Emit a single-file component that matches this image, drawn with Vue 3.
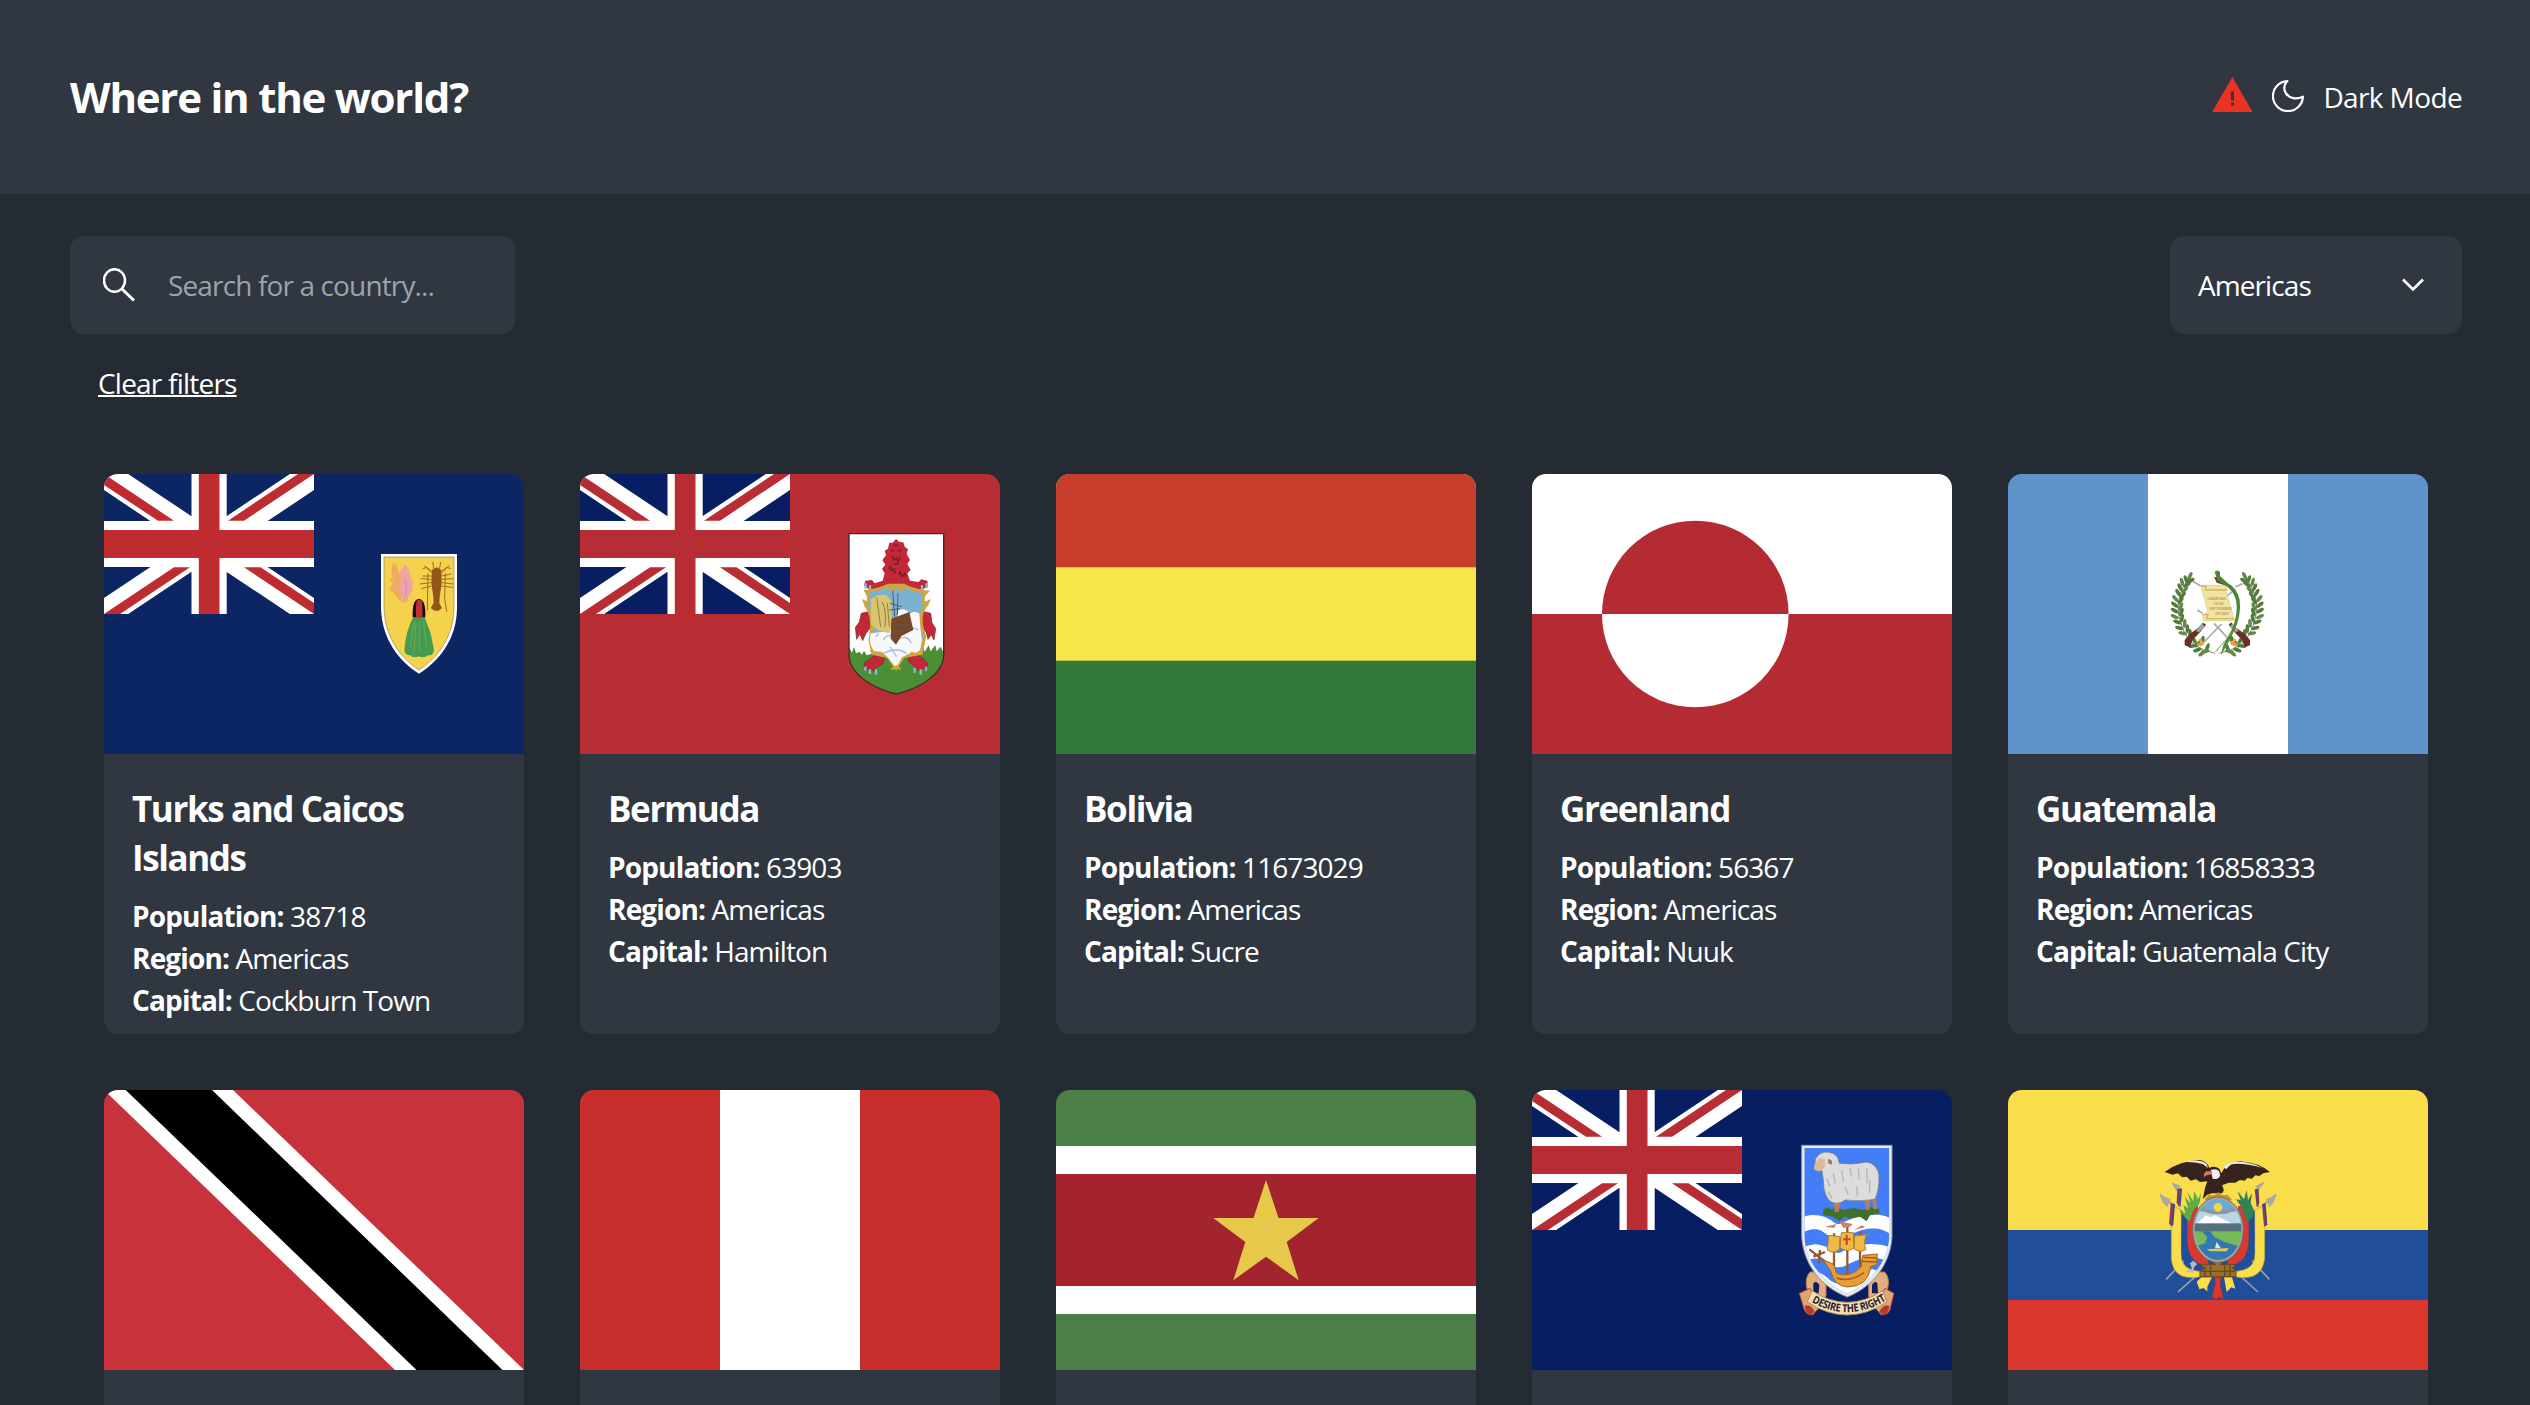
<script setup>
const countries = [
  { flag: 'tc', name: 'Turks and Caicos Islands', population: 38718, region: 'Americas', capital: 'Cockburn Town' },
  { flag: 'bm', name: 'Bermuda', population: 63903, region: 'Americas', capital: 'Hamilton' },
  { flag: 'bo', name: 'Bolivia', population: 11673029, region: 'Americas', capital: 'Sucre' },
  { flag: 'gl', name: 'Greenland', population: 56367, region: 'Americas', capital: 'Nuuk' },
  { flag: 'gt', name: 'Guatemala', population: 16858333, region: 'Americas', capital: 'Guatemala City' },
  { flag: 'tt' },
  { flag: 'pe' },
  { flag: 'sr' },
  { flag: 'fk' },
  { flag: 'ec' },
]

// Leaves along both wreath branches: x, y, rotation
const leaves = [
  [150, 108, 25], [138, 118, -20], [152, 122, 60], [126, 126, -15], [142, 134, 50], [120, 142, -25],
  [134, 150, 45], [114, 158, -30], [128, 166, 40], [106, 176, -40], [122, 182, 35], [104, 194, -50],
  [122, 200, 25], [104, 212, -60], [124, 216, 20], [104, 230, -65], [126, 234, 10], [112, 246, -70],
  [134, 250, 5], [118, 264, -75], [142, 266, 0], [128, 280, -80], [150, 280, 0], [162, 300, -30],
  [174, 312, 40], [188, 300, 10], [172, 330, 70], [186, 340, 50], [202, 322, 20], [158, 318, 80], [196, 334, 80],
]
</script>

<template>
  <div class="page">
    <svg width="0" height="0" class="defs">
      <symbol id="jack" viewBox="0 0 210 140">
        <path d="M0 0L210 140M0 140L210 0" stroke="#fff" stroke-width="26.8" />
        <path d="M0 0L70 46.7H54L0 11ZM210 0L140 46.7H124L194 0ZM0 140L70 93.3H86L16 140ZM210 140L140 93.3H156.5L210 129Z" fill="currentColor" />
        <path d="M87.500 0H122.700V47H210V93H122.700V140H87.500V93H0V47H87.500Z" fill="#fff" />
        <path d="M94.800 0H115.500V56H210V84H115.500V140H94.800V84H0V56H94.800Z" fill="currentColor" />
      </symbol>
    </svg>

    <header class="header">
      <h1>Where in the world?</h1>
      <div class="mode">
        <svg class="warn" width="41" height="35" viewBox="0 0 41 35">
          <path d="M20.400 0L40.600 35H.200Z" fill="#eb3323" />
          <path d="M19 14.500h3v9h-3zM19 25.500h3v3h-3z" fill="#303741" />
        </svg>
        <svg class="moon" width="32" height="32" viewBox="0 0 32 32">
          <path d="M15.400 1.100A15 15 0 1 0 30.900 16.600C24.500 20 17.500 18.500 14 13.500C11.500 9.500 11.800 4.800 15.400 1.100Z" fill="none" stroke="#fff" stroke-width="2.200" stroke-linejoin="round" />
        </svg>
        <span class="mode-label">Dark Mode</span>
      </div>
    </header>

    <section class="filters">
      <div class="search">
        <svg width="34" height="34" viewBox="0 0 34 34">
          <ellipse cx="11.500" cy="12.500" rx="10.500" ry="11.300" fill="none" stroke="#fff" stroke-width="2.500" />
          <path d="M19 21L31 32.500" stroke="#fff" stroke-width="3" />
        </svg>
        <span class="placeholder">Search for a country...</span>
      </div>
      <div class="select">
        <span class="option">Americas</span>
        <svg width="22" height="14" viewBox="0 0 22 14"><path d="M1 1.500L11 11.500L21 1.500" fill="none" stroke="#fff" stroke-width="2.600" /></svg>
      </div>
    </section>
    <a class="clear">Clear filters</a>

    <main class="grid">
      <article v-for="c in countries" :key="c.flag" class="card">
        <svg class="flag" viewBox="0 0 420 280">
          <template v-if="c.flag === 'tc'">
            <rect width="420" height="280" fill="#0c2663" />
            <use href="#jack" width="210" height="140" color="#be2c30" />
            <g transform="translate(256 56) scale(.33333)">
              <path d="M63 72H291V235C290 330 235 395 177 431C118 395 66 330 63 235Z" fill="#fff" />
              <path d="M72 81H282V235C280 325 230 385 177 420C124 385 75 325 72 235Z" fill="#f5d24b" stroke="#8c8454" stroke-width="2" />
              <path d="M100 98L112 108L116 130L128 140L124 205L130 222L112 204L100 188L86 180L98 160L86 148L98 144L94 116Z" fill="#eeae62" />
              <path d="M135 103L147 118L150 140L159 155L156 185L147 195L141 215L131 218L126 200L114 178L124 150L118 130Z" fill="#efa3a2" />
              <path d="M134 145L140 170L136 200" fill="none" stroke="#c993c8" stroke-width="4" />
              <g fill="none" stroke="#a06a22" stroke-width="3">
                <path d="M216 130L192 106M216 138L188 138M214 148L182 146M214 158L180 162M214 168L184 176M244 130L268 106M244 138L274 132M244 148L280 146M244 158L280 162M244 168L278 172M222 120L218 96M238 120L242 96M204 130L202 242M256 130L254 205L260 245M216 124L200 112L188 116M244 124L260 112L272 116" />
              </g>
              <path d="M216 120L230 112L244 120L245 160L239 200L238 220L246 234L236 242H224L212 234L221 220L220 200L214 160Z" fill="#945518" />
              <path d="M160 262H194L212 310L222 360Q220 378 205 376Q190 386 177 379Q160 386 150 376Q134 375 133 360Q138 300 160 262Z" fill="#449b51" />
              <path d="M162 275L150 350M178 272V365M190 275L200 350M168 275L162 365" stroke="#73a84e" stroke-width="3" />
              <path d="M158 262Q156 208 177 207Q198 208 196 262Z" fill="#190d10" />
              <path d="M168 262Q166 235 170 212Q178 206 186 212Q188 235 187 262Z" fill="#c62f35" />
            </g>
          </template>

          <template v-else-if="c.flag === 'bm'">
            <rect width="420" height="280" fill="#b82c33" />
            <rect width="210" height="140" fill="#071f62" />
            <use href="#jack" width="210" height="140" color="#b82c33" />
            <g transform="translate(240 36) scale(.33333)">
              <path d="M87 71H371V440C366 495 300 535 229 552C158 535 92 495 87 440Z" fill="#fff" />
              <path d="M87 412L96 428L102 410L108 430L118 425L126 434L132 422L140 436L160 430L229 440L300 425L308 408L314 425L326 406L332 424L346 405L350 424L362 410L371 430V440C366 495 300 535 229 552C158 535 92 495 87 440Z" fill="#4b8f35" />
              <path d="M87 71H371V440C366 495 300 535 229 552C158 535 92 495 87 440Z" fill="none" stroke="#48262c" stroke-width="4" />
              <path d="M228 87L238 96L250 97L254 110L264 118L260 132L270 150L262 162L272 180L262 190L270 212L296 216L304 208L322 212L324 228L306 240L270 232H190L150 240L132 226L136 212L156 210L164 220L188 212L194 190L186 176L196 164L187 150L198 136L194 122L204 116L208 98L218 98Z" fill="#c22838" />
              <path d="M212 120L222 124M234 124L244 120M216 138L222 150L228 144L234 155L240 140M206 176L212 170L214 182L222 176L226 190M236 195L240 186L246 200L254 190L258 200M222 162H236M220 106H236" stroke="#721c29" stroke-width="4" fill="none" />
              <path d="M150 304L124 310L118 336L106 352L110 388L120 372L128 392L138 370L154 350ZM308 304L332 310L336 338L347 356L342 390L334 374L324 388L318 366L300 346Z" fill="#c22838" stroke="#85212d" stroke-width="2" />
              <path d="M176 430L150 446L132 460L136 482L148 474L160 484L170 472L188 462L196 440ZM282 430L310 446L324 462L318 482L306 474L296 484L286 470L268 458L262 444Z" fill="#c22838" stroke="#85212d" stroke-width="2" />
              <path d="M136 470V482M150 478V492M168 478V494M284 474V488M302 478V494M318 470V482M137 220V236M150 226V238M306 226V240M320 220V234" stroke="#86bce0" stroke-width="7" />
              <path d="M138 244Q180 238 205 226H252Q280 242 320 246Q302 262 316 290Q292 320 314 380L304 430L250 440L228 474L204 440L158 430L150 390Q164 320 138 288Q154 266 138 244Z" fill="#7ab2d0" stroke="#d0a63c" stroke-width="9" />
              <path d="M152 370Q144 400 162 424L185 425L206 445L228 474L246 442L270 430L298 432L306 390Q300 350 298 310Q280 300 270 312Q258 292 235 300L230 345L190 365Z" fill="#f8f8fb" />
              <path d="M190 390Q200 370 216 380M230 390Q260 370 274 400M190 430Q230 410 260 430M176 370L168 380M270 350L295 360M210 410L230 440" fill="none" stroke="#a9bdd8" stroke-width="4" />
              <path d="M152 268L172 256L198 254L214 272L216 345L208 370L176 362L154 345Z" fill="#d9c472" />
              <path d="M170 262L182 350M186 275Q200 300 195 350M202 280L208 350" stroke="#957c3b" stroke-width="3" fill="none" />
              <path d="M214 326L268 306L280 360L244 378L228 404L212 386Z" fill="#75472b" />
              <path d="M218 240L224 320M234 250L232 315M210 280L246 290M208 300L240 296M226 345L268 345M220 365L255 365" stroke="#5b5860" stroke-width="3" fill="none" />
              <path d="M206 224Q200 242 216 240L228 230L240 240Q256 238 248 222M138 288L132 274L146 280M320 288L326 274L312 280M152 420Q165 438 184 428M304 420Q292 438 272 428M215 478L228 470L242 478" stroke="#d0a63c" stroke-width="7" fill="none" />
            </g>
          </template>

          <template v-else-if="c.flag === 'bo'">
            <rect width="420" height="280" fill="#f7e54c" />
            <rect width="420" height="93.300" fill="#c63d2c" />
            <rect y="186.700" width="420" height="93.300" fill="#33793b" />
          </template>

          <template v-else-if="c.flag === 'gl'">
            <rect width="420" height="280" fill="#fff" />
            <rect y="140" width="420" height="140" fill="#b52b33" />
            <circle cx="163.300" cy="140" r="93.300" fill="#fff" />
            <path d="M70 140A93.300 93.300 0 0 1 256.600 140Z" fill="#b52b33" />
          </template>

          <template v-else-if="c.flag === 'gt'">
            <rect width="420" height="280" fill="#6093ca" />
            <rect x="140" width="140" height="280" fill="#fff" />
            <g transform="translate(132 66) scale(.33333)">
              <g stroke="#a9a9ad" stroke-width="5" fill="none">
                <path d="M158 124L182 138M172 210L188 220M190 250L140 305M270 248L320 305M222 250L285 318M245 252L180 318M258 170L286 148M286 140L312 130" />
              </g>
              <g v-for="side in 2" :key="side" :transform="side === 2 ? 'translate(464 0) scale(-1 1)' : ''">
                <path d="M152 108Q90 180 130 270Q150 325 225 340" fill="none" stroke="#8d7a72" stroke-width="3" />
                <ellipse v-for="(l, i) in leaves" :key="i" :transform="`translate(${l[0]} ${l[1]}) rotate(${l[2]})`" rx="5.500" ry="13" :fill="i % 3 ? '#537c3b' : '#64894b'" />
                <path d="M190 248L178 262L152 280L134 300V316L150 322L158 300L184 272L198 254Z" fill="#6b3025" />
                <path d="M186 250L168 274L178 276L194 260Z" fill="#a3a3a8" />
                <path d="M172 316L192 306M180 296L188 316" stroke="#e9a52e" stroke-width="8" />
              </g>
              <path d="M182 136H262L258 154L284 242H190L188 224L204 216Z" fill="#f2e3a0" stroke="#dcc779" stroke-width="2" />
              <path d="M184 138H198L196 150H262M188 224H204L200 236H282" stroke="#cdb567" stroke-width="4" fill="none" />
              <g font-family="Open Sans, sans-serif" font-size="12" font-weight="700" fill="#c0a263">
                <text x="202" y="180" textLength="56">LIBERTAD</text>
                <text x="220" y="195" textLength="30">15 DE</text>
                <text x="208" y="211" textLength="66">SEPTIEMBRE</text>
                <text x="226" y="226" textLength="40">DE 1821</text>
              </g>
              <path d="M222 110L230 128L262 138L240 114Z" fill="#743f30" />
              <path d="M224 96Q232 87 240 96L240 108L262 128Q292 145 299 180Q304 225 284 270L258 322L242 344L250 316L276 268Q296 220 288 180Q280 152 256 136L232 120Z" fill="#4a8637" />
              <path d="M282 272L226 336M270 296L244 340" stroke="#6a9c52" stroke-width="3" />
            </g>
          </template>

          <template v-else-if="c.flag === 'tt'">
            <rect width="420" height="280" fill="#c8333b" />
            <path d="M0 0H129L420 280H291Z" fill="#fff" />
            <path d="M21.700 0H108L398.500 280H312.500Z" fill="#000" />
          </template>

          <template v-else-if="c.flag === 'pe'">
            <rect width="420" height="280" fill="#c72e2c" />
            <rect x="140" width="140" height="280" fill="#fff" />
          </template>

          <template v-else-if="c.flag === 'sr'">
            <rect width="420" height="280" fill="#4b7f45" />
            <rect y="56" width="420" height="168" fill="#fff" />
            <rect y="84" width="420" height="112" fill="#a3242f" />
            <path d="M210 90L222.500 128H262.700L230.700 152L242.700 190.300L210 166.700L177.300 190.300L189.300 152L157.300 128H197.500Z" fill="#e6c84a" />
          </template>

          <template v-else-if="c.flag === 'fk'">
            <rect width="420" height="280" fill="#071f62" />
            <use href="#jack" width="210" height="140" color="#b82c33" />
            <g transform="translate(238 30) scale(.33333)">
              <path d="M140 456H120Q102 475 112 510L150 545L168 528V490ZM322 456H344Q362 475 352 510L316 545L296 530V480Z" fill="#e4ae7c" stroke="#b67a50" stroke-width="3" />
              <path d="M130 490Q140 480 148 495L146 520H130ZM322 490Q314 480 306 495V520H324Z" fill="#0a1f5c" />
              <path d="M88 520L120 505L150 560L128 585Q104 584 100 560ZM372 520L345 505L312 560L334 585Q360 584 362 560Z" fill="#e2a475" stroke="#a84d35" stroke-width="3" />
              <path d="M104 558Q120 550 134 575L124 584Q104 580 104 558ZM358 558Q342 550 328 575L338 584Q358 580 358 558Z" fill="#b33c31" />
              <path d="M95 76H366V350C362 430 310 500 232 531C150 500 100 430 95 350Z" fill="#e9eaf0" stroke="#8f93ae" stroke-width="3" />
              <clipPath id="shield"><path d="M103 84H358V350C354 425 300 490 232 521C160 490 107 425 103 350Z" /></clipPath>
              <g clip-path="url(#shield)">
                <rect x="95" y="76" width="272" height="460" fill="#437ef7" />
                <g fill="none" stroke="#fff" stroke-width="42">
                  <path d="M85 320Q108 308 128 306Q160 306 180 325Q205 342 232 325Q270 306 310 304Q340 304 375 325" />
                  <path d="M85 410Q108 398 134 394Q160 396 180 412Q205 430 232 410Q280 390 315 394Q345 394 375 412" />
                  <path d="M85 490Q130 455 170 500Q200 520 232 510Q270 500 310 470L375 490" />
                </g>
              </g>
              <path d="M160 268L176 262L184 270L196 260L220 270L250 264L280 270L300 260L328 268V282L300 286L290 304L270 290L240 296L224 290L208 304L190 290L160 286Z" fill="#3f702c" />
              <path d="M190 240L194 276H206L214 244ZM282 236L288 270H298L302 238ZM306 232L310 268H320L318 226Z" fill="#b67e5b" />
              <path d="M136 118Q150 92 176 97Q204 100 208 130Q250 136 290 126Q322 132 327 165Q328 215 314 238Q270 246 226 240Q206 256 184 246Q160 230 160 180L156 152L134 150Z" fill="#dcdcdb" stroke="#77777c" stroke-width="2" />
              <path d="M132 138L146 114L166 118L164 142L150 154L134 150Z" fill="#dfb99b" />
              <path d="M174 118Q188 116 186 134L174 130Z" fill="#a5755d" />
              <path d="M170 175L180 200M190 160L196 190M215 150L220 185M240 145L245 170M265 145L268 180M290 145L292 190M225 200L235 225M260 200L262 230M300 180L298 220M174 215L186 235" stroke="#b3b5b8" stroke-width="4" />
              <path d="M232 318V470M192 340V440M270 335V440M118 388L174 432M150 390L146 430M130 410L165 396" stroke="#935a36" stroke-width="7" />
              <path d="M164 320L200 312L192 324ZM208 304L248 312L240 320L220 324ZM252 330L286 322L276 316Z" fill="#d77d6c" />
              <path d="M176 346L210 350L208 388Q190 404 172 390ZM214 338H250L252 384Q232 398 210 384ZM254 348L290 344Q278 366 288 388Q270 400 252 386Z" fill="#edb947" stroke="#b77b26" stroke-width="3" />
              <path d="M230 345V375M220 358H242" stroke="#cb3e2c" stroke-width="6" />
              <path d="M160 420L190 432L200 460Q240 476 274 440L278 406L322 402L320 434L302 440Q296 500 232 501Q192 498 182 452Z" fill="#e5a035" stroke="#a56523" stroke-width="3" />
              <path d="M280 412L320 414M276 424L318 426M200 474Q240 488 282 458" stroke="#a35b26" stroke-width="4" fill="none" />
              <path id="motto-band" d="M118 542Q232 612 350 540" fill="none" />
              <path d="M126 512Q232 582 338 512L350 546Q232 624 112 546Z" fill="#f4dfb5" stroke="#b68c61" stroke-width="3" />
              <text font-family="Open Sans, sans-serif" font-size="33" font-weight="700" fill="#24242a"><textPath href="#motto-band" startOffset="8" textLength="235" lengthAdjust="spacingAndGlyphs">DESIRE THE RIGHT</textPath></text>
            </g>
          </template>

          <template v-else>
            <rect width="420" height="280" fill="#f9dd4a" />
            <rect y="140" width="420" height="140" fill="#204e9b" />
            <rect y="210" width="420" height="70" fill="#da382f" />
            <g transform="translate(122 40) scale(.33333)">
              <g stroke="#9a9ea5" stroke-width="5">
                <path d="M108 448L170 385M144 486L230 410M418 448L360 385M384 486L300 410M128 160L148 190M90 194L130 225M400 158L378 185M438 194L400 225M170 424H345" />
              </g>
              <path d="M126 158L150 166L146 180ZM88 194L122 208L112 232L100 220ZM402 156L376 168L384 182ZM440 194L408 208L418 232L430 218Z" fill="#a7a9a9" />
              <path d="M148 178L178 190V270L166 280L150 250ZM380 178L350 190V270L362 280L378 250Z" fill="#f9dd4a" />
              <path d="M124 225L154 240V385Q160 420 210 425V440Q130 455 124 385ZM404 225L374 240V385Q368 420 316 425V440Q396 455 404 385Z" fill="#f9dd4a" stroke="#c6a438" stroke-width="2" />
              <path d="M154 240L176 270V350Q185 395 220 408V424Q160 420 154 370ZM374 240L352 270V350Q344 395 306 408V424Q366 420 374 370Z" fill="#204e9b" />
              <path d="M182 228H204V350L235 390V408Q174 402 172 330V270ZM346 228H324V350L293 390V408Q354 402 356 330V270Z" fill="#da382f" />
              <path d="M142 176L154 178L148 232L140 218ZM122 220L133 222L128 290L117 282ZM374 178L386 176L388 218L380 232ZM396 222L407 220L412 285L402 290Z" fill="#8c3b54" />
              <path d="M148 176L154 178L150 230M128 222L133 224L128 285M380 178L384 230M402 222L410 285" stroke="#28509a" stroke-width="4" fill="none" />
              <path d="M146 240L166 250L160 225L174 235L164 200L182 220L172 186L190 214L192 182L204 208L214 188L208 222L190 240L178 276Z" fill="#5eaa45" />
              <path d="M352 276L334 230L318 208L332 210L322 182L342 208L350 180L354 210L366 190L362 220L372 240L368 262Z" fill="#328254" />
              <path d="M200 455L214 442H246L232 470V484L220 474L208 478ZM282 442H306L316 476L304 472L290 486Z" fill="#f9dd4a" />
              <path d="M254 438H274L270 460L280 506L268 500L262 508L246 502L256 460Z" fill="#da382f" stroke="#96342d" stroke-width="2" />
              <path d="M210 404L222 414L210 425V440H318V425L308 414L318 404H270L280 394L264 388L246 394L256 404Z" fill="#997027" stroke="#65491f" stroke-width="3" />
              <path d="M225 408V438M242 408V438M284 408V438M300 408V438M214 424H314" stroke="#66491e" stroke-width="4" />
              <path d="M104 126Q150 91 210 90Q232 94 238 114Q252 106 268 116L274 130Q288 96 330 94Q386 98 420 126L400 130L388 138L376 136L366 146L352 144L344 152L330 150L316 158L296 158L276 166Q286 180 276 190H246L232 194L218 208L226 170L232 154L210 156L198 148L182 152L170 140L156 142L144 130L128 134Z" fill="#37231d" />
              <path d="M152 97Q210 84 230 102L234 114L218 102Q188 94 152 97ZM280 110Q310 84 376 104L398 114Q330 96 302 104L288 118Z" fill="#ededeb" />
              <path d="M242 120Q270 112 270 136Q268 150 248 146Z" fill="#f3f2ef" />
              <path d="M222 132L228 124L246 124L244 134Q230 132 222 142Z" fill="#db7569" />
              <path d="M224 208L236 195L254 196L264 186L276 196L292 195L306 208L290 218H238Z" fill="#c19231" />
              <ellipse cx="264" cy="299" rx="76" ry="98" fill="#a6a7a2" stroke="#65716f" stroke-width="3" />
              <clipPath id="oval"><ellipse cx="264" cy="299" rx="70" ry="91" /></clipPath>
              <g clip-path="url(#oval)">
                <rect x="190" y="200" width="150" height="200" fill="#67add8" />
                <rect x="190" y="245" width="150" height="45" fill="#b7d7e5" />
                <path d="M200 282L228 256L242 262L254 256L280 268L314 284Z" fill="#fff" />
                <rect x="190" y="280" width="150" height="28" fill="#53717c" />
                <rect x="190" y="304" width="150" height="50" fill="#79ba58" />
                <path d="M215 304L232 322L225 340L190 352V400H340V352L290 338L254 322L240 304Z" fill="#3279b3" />
                <path d="M215 236Q264 260 315 236" fill="none" stroke="#90949c" stroke-width="10" />
              </g>
              <circle cx="264" cy="232" r="13" fill="#f5d249" />
              <path d="M230 358L296 354L290 364H240Z" fill="#e3c65a" />
              <path d="M255 355L260 335L272 354" fill="#dce6e8" />
              <path d="M180 400L190 392L202 402L192 412L190 428L165 424L186 418Z" fill="#b9bbb7" />
            </g>
          </template>
        </svg>
        <div v-if="c.name" class="body">
          <h2>{{ c.name }}</h2>
          <p><b>Population:</b> {{ c.population }}</p>
          <p><b>Region:</b> {{ c.region }}</p>
          <p><b>Capital:</b> {{ c.capital }}</p>
        </div>
      </article>
    </main>
  </div>
</template>

<style>
body {
  background: #252b33;
}
</style>

<style scoped>
.page {
  width: 2530px;
  height: 1405px;
  overflow: hidden;
  background: #252b33;
  color: #fff;
  font: 400 28px/42px 'Open Sans', 'Noto Sans', sans-serif;
  letter-spacing: -0.92px;
  display: flex;
  flex-direction: column;
}
.defs {
  position: absolute;
}
.header {
  flex: none;
  height: 194px;
  box-sizing: border-box;
  padding: 0 68px 0 70px;
  display: flex;
  align-items: center;
  justify-content: space-between;
  background: #303741;
}
h1,
h2,
p {
  margin: 0;
}
h1 {
  font-size: 42px;
  line-height: 60px;
  letter-spacing: -1.22px;
  white-space: nowrap;
}
.mode {
  display: flex;
  align-items: center;
}
.mode-label {
  letter-spacing: -0.62px;
}
.warn {
  margin: -6px 19px 0 0;
}
.moon {
  margin: -2px 19px 0 0;
}
.filters {
  flex: none;
  padding: 42px 68px 0 70px;
  display: flex;
  justify-content: space-between;
}
.search,
.select {
  height: 98px;
  box-sizing: border-box;
  border-radius: 14px;
  background: #303741;
  display: flex;
  align-items: center;
}
.search {
  width: 445px;
  padding-left: 33px;
  gap: 31px;
}
.placeholder {
  color: #9ca3af;
  letter-spacing: -0.86px;
}
.select {
  width: 292px;
  padding: 0 38px 0 28px;
  justify-content: space-between;
}
.clear {
  flex: none;
  align-self: flex-start;
  margin: 28px 0 0 98px;
  letter-spacing: -0.78px;
  text-decoration: underline;
  text-decoration-thickness: 2px;
}
.grid {
  flex: none;
  margin: 70px 0 0 104px;
  display: grid;
  grid-template-columns: repeat(5, 420px);
  grid-auto-rows: 560px;
  gap: 56px;
}
.card {
  border-radius: 14px;
  overflow: hidden;
  background: #303741;
}
.flag {
  display: block;
  width: 420px;
  height: 280px;
}
.body {
  padding: 30px 28px 0;
}
h2 {
  font-size: 35px;
  line-height: 49px;
  letter-spacing: -1.4px;
  margin-bottom: 13px;
}
b {
  letter-spacing: -0.84px;
}
</style>
